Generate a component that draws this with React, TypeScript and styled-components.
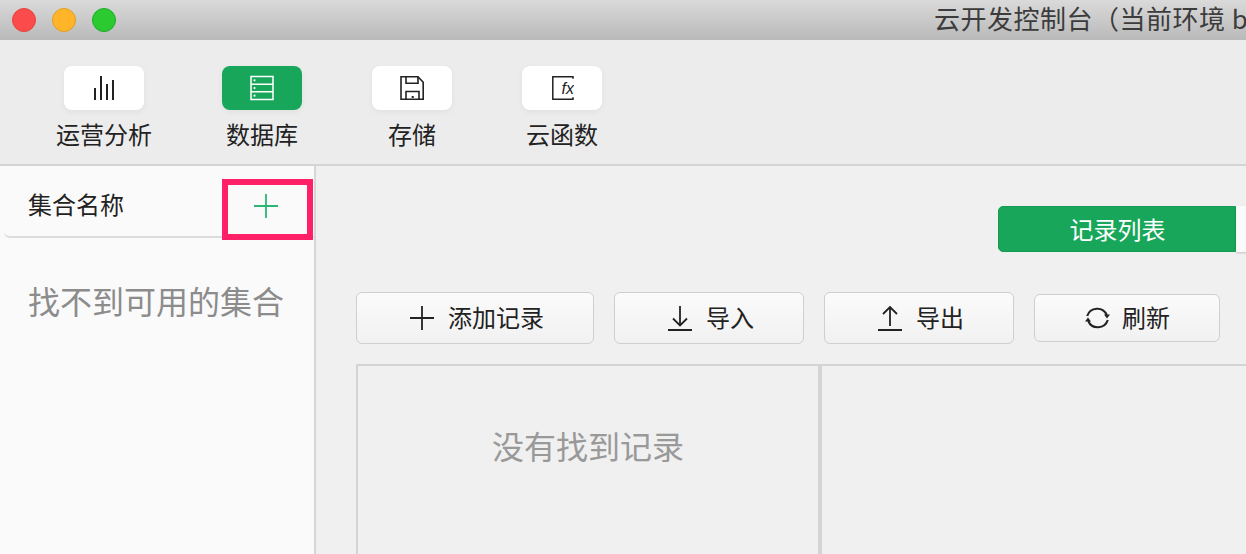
import React from "react";
import styled, { createGlobalStyle } from "styled-components";

const Global = createGlobalStyle`
  html, body { margin: 0; padding: 0; background: #f0f0f0; }
  body { font-family: "Noto Sans CJK SC", "Liberation Sans", sans-serif; }
  * { box-sizing: border-box; }
`;
const Win = styled.div`
  width: 1246px; height: 554px; overflow: hidden; display: flex; flex-direction: column; background: #f0f0f0;
`;
const TitleBar = styled.div`
  height: 40px; flex: none; display: flex; align-items: center; padding-left: 12px;
  background: linear-gradient(#dadada, #b9b9b9); overflow: hidden;
`;
const Lights = styled.div` display: flex; gap: 16px; width: 922px; flex: none; `;
const Light = styled.span<{ $fill: string; $edge: string }>`
  width: 24px; height: 24px; border-radius: 50%; background: ${p => p.$fill}; border: 1px solid ${p => p.$edge};
`;
const Title = styled.div`
  font-size: 26px; line-height: 36px; letter-spacing: 0.5px; color: #3c3c3c; white-space: nowrap; padding-bottom: 4px;
`;
const Toolbar = styled.div`
  height: 126px; flex: none; background: #ececec; border-bottom: 2px solid #d4d4d4;
  display: flex; gap: 70px; padding: 26px 0 0 56px; align-items: flex-start;
`;
const Tool = styled.div` display: flex; flex-direction: column; align-items: center; gap: 6px; `;
const ToolIcon = styled.div<{ $active?: boolean }>`
  width: 80px; height: 44px; border-radius: 8px; display: flex; align-items: center; justify-content: center;
  background: ${p => (p.$active ? "#18a75a" : "#fff")}; color: ${p => (p.$active ? "#fff" : "#222")};
  box-shadow: 0 2px 6px rgba(0,0,0,.05);
`;
const ToolLabel = styled.div` font-size: 24px; line-height: 36px; color: #222; white-space: nowrap; `;
const Body = styled.div` flex: 1; display: flex; min-height: 0; `;
const Sidebar = styled.aside`
  width: 316px; flex: none; background: #fafafa; border-right: 2px solid #d6d6d6; padding-left: 4px;
`;
const SideHead = styled.div`
  height: 72px; display: flex; align-items: center; justify-content: space-between; padding: 4px 36px 0 24px;
  border-bottom: 2px solid #dcdcdc; border-bottom-left-radius: 6px; position: relative; font-size: 24px; color: #222;
`;
const AddMark = styled.span` display: flex; margin-top: 6px; `;
const Highlight = styled.div`
  position: absolute; left: 218px; top: 13px; width: 91px; height: 61px; border: 6px solid #ff2068;
`;
const Empty = styled.div` font-size: 32px; line-height: 46px; color: #8c8c8c; padding: 39px 0 0 24px; `;
const Main = styled.main` flex: 1; min-width: 0; overflow: hidden; padding: 40px 0 0 40px; `;
const Tabs = styled.div` display: flex; margin-left: 642px; height: 46px; width: 476px; `;
const Tab = styled.div<{ $active?: boolean }>`
  width: 238px; flex: none; display: flex; align-items: center; justify-content: center; font-size: 24px;
  padding: 0 0 2px 1px;
  border-radius: ${p => (p.$active ? "5px 0 0 5px" : "0")};
  border: 1px solid ${p => (p.$active ? "#149d52" : "transparent")};
  background: ${p => (p.$active ? "#18a75a" : "#fafafa")}; color: #fff;
  box-shadow: ${p => (p.$active ? "none" : "0 1px 2px rgba(0,0,0,.2)")};
`;
const Actions = styled.div` display: flex; gap: 20px; align-items: center; margin-top: 40px; height: 52px; `;
const Action = styled.div<{ $w: number; $short?: boolean }>`
  width: ${p => p.$w}px; height: ${p => (p.$short ? 48 : 52)}px; display: flex; align-items: center; justify-content: center;
  gap: ${p => (p.$short ? 12 : 14)}px; padding-left: ${p => (p.$short ? 1 : 4)}px;
  border: 1px solid #cfcfcf; border-radius: 6px; background: linear-gradient(#fbfbfb, #f1f1f1);
  font-size: 24px; color: #222;
`;
const ActionText = styled.span` padding-bottom: 4px; `;
const Table = styled.div`
  margin-top: 20px; height: 200px; border-top: 2px solid #d4d4d4; border-left: 2px solid #d4d4d4; display: flex;
`;
const Cell = styled.div`
  width: 464px; flex: none; border-right: 4px solid #d4d4d4; text-align: center; font-size: 32px; line-height: 46px; color: #999;
  padding-top: 56px;
`;

const Bars = () => (
  <svg width="24" height="26" viewBox="0 0 24 26" stroke="currentColor" strokeWidth="2" fill="none">
    <path d="M3 13v12M9 1v24M15 9v16M21 5v20" />
  </svg>
);
const Db = () => (
  <svg width="24" height="26" viewBox="0 0 24 26" fill="none" stroke="currentColor" strokeWidth="1.5">
    <rect x="1" y="1.5" width="22" height="23" />
    <path d="M1 9.2h22M1 16.8h22" />
    <circle cx="4.5" cy="5.3" r="1.1" fill="currentColor" stroke="none" />
    <circle cx="4.5" cy="13" r="1.1" fill="currentColor" stroke="none" />
    <circle cx="4.5" cy="20.7" r="1.1" fill="currentColor" stroke="none" />
  </svg>
);
const Save = () => (
  <svg width="24" height="26" viewBox="0 0 24 26" fill="none" stroke="currentColor" strokeWidth="1.6">
    <path d="M1 1.8h17l5.2 5.4v17H1z" />
    <path d="M6 2v6.2h12V2M6 24v-7.5h13V24" />
    <path d="M12.7 21v2" strokeWidth="2" />
  </svg>
);
const Fx = () => (
  <svg width="24" height="26" viewBox="0 0 24 26" fill="none">
    <path d="M23 1.8H2.8v22.4H23M23 1v2.8M23 25v-2.8" stroke="currentColor" strokeWidth="1.5" />
    <text x="11.5" y="19" fontSize="16" fontStyle="italic" fontFamily="Liberation Sans" fill="currentColor">fx</text>
  </svg>
);
const Plus = ({ color }: { color: string }) => (
  <svg width="24" height="24" viewBox="0 0 24 24" stroke={color} strokeWidth="1.8" fill="none"><path d="M0 12h24M12 0v24" /></svg>
);
const Down = () => (
  <svg width="24" height="26" viewBox="0 0 24 26" stroke="currentColor" strokeWidth="1.8" fill="none"><path d="M12 1v19M5 13.5l7 7 7-7M0 25h24" /></svg>
);
const Up = () => (
  <svg width="24" height="26" viewBox="0 0 24 26" stroke="currentColor" strokeWidth="1.8" fill="none"><path d="M12 21V3M5 9l7-7 7 7M0 25h24" /></svg>
);
const Refresh = () => (
  <svg width="25" height="26" viewBox="0 0 25 26" stroke="currentColor" strokeWidth="2.1" fill="none">
    <path d="M2.2 11A10.5 10.5 0 0 1 21.8 10M22.8 15A10.5 10.5 0 0 1 3.2 16" />
    <path d="M19 9.5h6l-3 4zM0 16.5h6l-3-4z" fill="currentColor" stroke="none" />
  </svg>
);

export default function App() {
  return (
    <Win>
      <Global />
      <TitleBar>
        <Lights>
          <Light $fill="#fc4b4b" $edge="#e2443f" />
          <Light $fill="#ffb429" $edge="#dfa023" />
          <Light $fill="#2aca30" $edge="#1dab2b" />
        </Lights>
        <Title>云开发控制台（当前环境 b</Title>
      </TitleBar>
      <Toolbar>
        <Tool><ToolIcon><Bars /></ToolIcon><ToolLabel>运营分析</ToolLabel></Tool>
        <Tool><ToolIcon $active><Db /></ToolIcon><ToolLabel>数据库</ToolLabel></Tool>
        <Tool><ToolIcon><Save /></ToolIcon><ToolLabel>存储</ToolLabel></Tool>
        <Tool><ToolIcon><Fx /></ToolIcon><ToolLabel>云函数</ToolLabel></Tool>
      </Toolbar>
      <Body>
        <Sidebar>
          <SideHead>
            集合名称
            <AddMark><Plus color="#2cb573" /></AddMark>
            <Highlight />
          </SideHead>
          <Empty>找不到可用的集合</Empty>
        </Sidebar>
        <Main>
          <Tabs>
            <Tab $active>记录列表</Tab>
            <Tab />
          </Tabs>
          <Actions>
            <Action $w={238}><Plus color="#222" /><ActionText>添加记录</ActionText></Action>
            <Action $w={190}><Down /><ActionText>导入</ActionText></Action>
            <Action $w={190}><Up /><ActionText>导出</ActionText></Action>
            <Action $w={186} $short><Refresh /><ActionText>刷新</ActionText></Action>
          </Actions>
          <Table>
            <Cell>没有找到记录</Cell>
          </Table>
        </Main>
      </Body>
    </Win>
  );
}
